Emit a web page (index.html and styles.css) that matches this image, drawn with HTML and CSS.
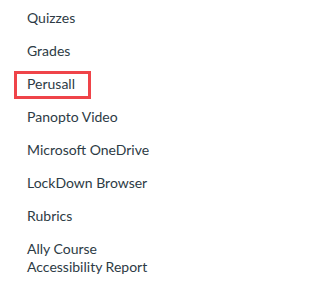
FILE: index.html
```html
<!DOCTYPE html>
<html lang="en">
<head>
<meta charset="utf-8">
<title>Course navigation</title>
<link rel="stylesheet" href="styles.css">
</head>
<body>
<nav class="course-nav">
  <ul class="nav-list">
    <li class="nav-item"><a class="nav-link" href="#">Quizzes</a></li>
    <li class="nav-item"><a class="nav-link" href="#">Grades</a></li>
    <li class="nav-item"><a class="nav-link nav-link--highlight" href="#">Perusall</a></li>
    <li class="nav-item"><a class="nav-link" href="#">Panopto Video</a></li>
    <li class="nav-item"><a class="nav-link" href="#">Microsoft OneDrive</a></li>
    <li class="nav-item"><a class="nav-link" href="#">LockDown Browser</a></li>
    <li class="nav-item"><a class="nav-link" href="#">Rubrics</a></li>
    <li class="nav-item"><a class="nav-link" href="#">Ally Course<br>Accessibility Report</a></li>
  </ul>
</nav>
</body>
</html>
```
FILE: styles.css
```css
html, body {
  margin: 0;
  padding: 0;
  background: #ffffff;
}

body {
  font-family: Lato, "Noto Sans", sans-serif;
  font-size: 14px;
  line-height: 18px;
  color: #2d3b45;
}

.course-nav {
  padding: 5px 0 0 14px;
}

.nav-list {
  list-style: none;
  margin: 0;
  padding: 0;
  display: flex;
  flex-direction: column;
  align-items: flex-start;
  gap: 5px;
}

.nav-link {
  display: inline-block;
  padding: 1px 13px 3px 10px;
  border: 3px solid transparent;
  color: #2d3b45;
  text-decoration: none;
}

.nav-link--highlight {
  border-color: #ef4449;
}
```
